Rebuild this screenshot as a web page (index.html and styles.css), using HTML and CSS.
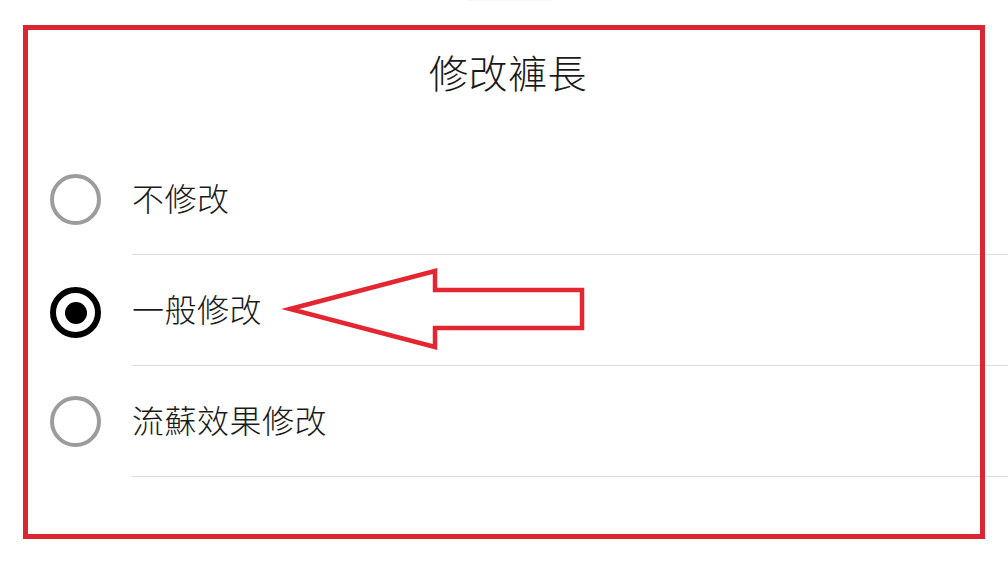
FILE: index.html
```html
<!DOCTYPE html>
<html lang="zh-Hant">
<head>
<meta charset="utf-8">
<title>修改褲長</title>
<link rel="stylesheet" href="styles.css">
</head>
<body>
<div class="screen">
  <div class="topline"></div>
  <h1 class="title">修改褲長</h1>
  <ul class="options">
    <li class="option">
      <span class="radio-cell"><span class="radio"></span></span>
      <span class="label">不修改</span>
    </li>
    <li class="option">
      <span class="radio-cell"><span class="radio checked"></span></span>
      <span class="label">一般修改</span>
    </li>
    <li class="option">
      <span class="radio-cell"><span class="radio"></span></span>
      <span class="label">流蘇效果修改</span>
    </li>
  </ul>
  <div class="highlight-box"></div>
  <svg class="arrow" width="1008" height="565" viewBox="0 0 1008 565">
    <polygon points="290,309 435,271 435,290 582,290 582,328 435,328 435,347" fill="none" stroke="#e3262f" stroke-width="4.5" stroke-linejoin="miter"/>
  </svg>
</div>
</body>
</html>
```

FILE: styles.css
```css
* { box-sizing: border-box; }
html, body {
  margin: 0;
  padding: 0;
  background: #ffffff;
}
body {
  font-family: "Noto Sans CJK TC", "Noto Sans", sans-serif;
  color: #1e1e1e;
}
.screen {
  position: relative;
  width: 1008px;
  height: 565px;
  overflow: hidden;
  background: #fff;
}
.topline {
  position: absolute;
  left: 467px;
  top: 0;
  width: 85px;
  height: 1px;
  background: #f6f6f6;
}
.title {
  margin: 0;
  height: 144px;
  display: flex;
  align-items: center;
  justify-content: center;
  padding-bottom: 2px;
  padding-left: 8px;
  font-size: 39px;
  font-weight: 300;
  letter-spacing: 0.5px;
  color: #1a1a1a;
}
.options {
  list-style: none;
  margin: 0;
  padding: 0;
}
.option {
  display: flex;
  height: 111px;
}
.radio-cell {
  width: 132px;
  padding-left: 50px;
  display: flex;
  align-items: center;
  padding-bottom: 1px;
}
.radio {
  width: 51px;
  height: 51px;
  border-radius: 50%;
  border: 4px solid #9c9c9c;
  display: flex;
  align-items: center;
  justify-content: center;
}
.radio.checked {
  border: 6px solid #000;
}
.radio.checked::after {
  content: "";
  width: 22px;
  height: 22px;
  border-radius: 50%;
  background: #000;
}
.option:nth-child(2) .radio-cell {
  padding-top: 5px;
}
.label {
  flex: 1;
  display: flex;
  align-items: center;
  padding-bottom: 5px;
  border-bottom: 1px solid #dcdcdc;
  font-size: 32px;
  font-weight: 300;
  color: #1a1a1a;
  letter-spacing: 0.5px;
}
.highlight-box {
  position: absolute;
  left: 23px;
  top: 25px;
  width: 962px;
  height: 514px;
  border: 5px solid #da2630;
  pointer-events: none;
}
.arrow {
  position: absolute;
  left: 0;
  top: 0;
  pointer-events: none;
}
```
